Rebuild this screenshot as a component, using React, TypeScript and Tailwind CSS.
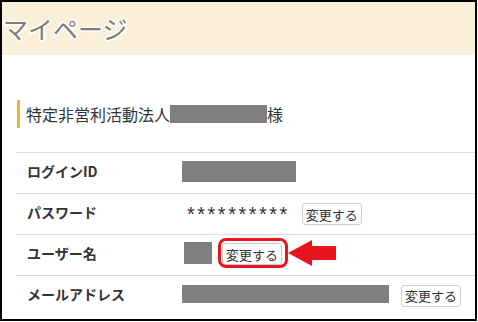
import React from "react";

const jp = { fontFamily: '"Noto Sans CJK JP", "Noto Sans", sans-serif' };

function ChangeButton() {
  return (
    <button className="h-[22px] w-[60px] flex items-center justify-center rounded-[3px] border border-[#cccccc] bg-white text-[13px] leading-none text-[#333333]">
      変更する
    </button>
  );
}

function Row({ label, children }: { label: string; children: React.ReactNode }) {
  return (
    <div className="flex items-center h-[41px] border-t border-[#dddddd]">
      <div className="w-[166px] pl-[11px] text-[14px] font-bold text-[#333333] leading-none mt-[-5px]">{label}</div>
      <div className="flex items-center flex-1">{children}</div>
    </div>
  );
}

export default function App() {
  return (
    <div className="w-[478px] h-[322px] bg-white" style={jp}>
      <div className="w-[477px] h-[321px] border-2 border-black bg-white overflow-hidden">
        <div className="h-[53px] bg-[#faf0da] flex items-center pl-[1px]">
          <span
            className="text-[25px] leading-none text-[#827d78] [text-shadow:1px_0_0_#fff,-1px_0_0_#fff,0_1px_0_#fff,0_-1px_0_#fff,1px_1px_0_#fff,-1px_-1px_0_#fff,1px_-1px_0_#fff,-1px_1px_0_#fff,2px_0_1px_#fff,0_2px_1px_#fff]"
          >
            マイページ
          </span>
        </div>
        <div className="pt-[45px] pl-[15px]">
          <div className="flex items-center h-[28px] border-l-[3px] border-[#e5b443] pl-[6px] text-[16px] text-[#333333] leading-none">
            <span>特定非営利活動法人</span>
            <span className="inline-block w-[97px] h-[18px] bg-[#808080]" />
            <span>様</span>
          </div>
          <div className="mt-[24px] ml-[-1px]">
            <Row label="ログインID">
              <div className="w-[114px] h-[21px] bg-[#808080] mt-[-3px]" />
            </Row>
            <Row label="パスワード">
              <span className="pl-[5px] text-[20px] leading-none tracking-[2.5px] text-[#333333]" style={{ fontFamily: '"Liberation Sans", sans-serif' }}>
                **********
              </span>
              <div className="ml-[12px]">
                <ChangeButton />
              </div>
            </Row>
            <Row label="ユーザー名">
              <div className="ml-[2px] w-[28px] h-[22px] bg-[#808080] mt-[-4px]" />
              <div className="relative ml-[10px] mt-[-2px]">
                <ChangeButton />
                <div className="absolute left-[-4px] top-[-5px] w-[70px] h-[30px] rounded-[8px] border-[3px] border-[#e8141e]" />
                <svg className="absolute left-[66px] top-[-4px]" width="50" height="28" viewBox="0 0 50 28">
                  <polygon points="0,14 24,1 24,7 48,7 48,21 24,21 24,27" fill="#e8141e" />
                </svg>
              </div>
            </Row>
            <Row label="メールアドレス">
              <div className="w-[207px] h-[18px] bg-[#808080] mt-[-4px]" />
              <div className="ml-[12px] mt-[-1px]">
                <ChangeButton />
              </div>
            </Row>
          </div>
        </div>
      </div>
    </div>
  );
}
